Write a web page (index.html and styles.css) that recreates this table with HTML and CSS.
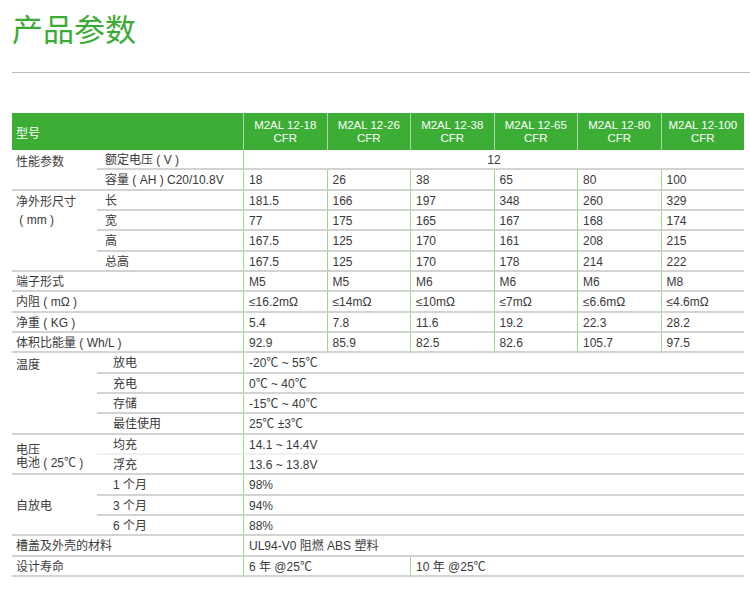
FILE: index.html
```html
<!DOCTYPE html>
<html lang="zh-CN">
<head>
<meta charset="utf-8">
<title>产品参数</title>
<link rel="stylesheet" href="styles.css">
</head>
<body>
<div class="page">
  <h1 class="title">产品参数</h1>
  <div class="rule"></div>
  <table class="spec">
    <colgroup>
      <col class="c-g"><col class="c-s">
      <col class="c-d"><col class="c-d"><col class="c-d"><col class="c-d"><col class="c-d"><col class="c-d">
    </colgroup>
    <thead>
      <tr>
        <th colspan="2" class="h-label">型号</th>
        <th class="h-model">M2AL 12-18<br>CFR</th>
        <th class="h-model">M2AL 12-26<br>CFR</th>
        <th class="h-model">M2AL 12-38<br>CFR</th>
        <th class="h-model">M2AL 12-65<br>CFR</th>
        <th class="h-model">M2AL 12-80<br>CFR</th>
        <th class="h-model">M2AL 12-100<br>CFR</th>
      </tr>
    </thead>
    <tbody>
      <tr>
        <td rowspan="2" class="g top">性能参数</td>
        <td class="s">额定电压 ( V )</td>
        <td colspan="6" class="d center">12</td>
      </tr>
      <tr>
        <td class="s">容量 ( AH ) C20/10.8V</td>
        <td class="d">18</td><td class="d">26</td><td class="d">38</td><td class="d">65</td><td class="d">80</td><td class="d">100</td>
      </tr>
      <tr>
        <td rowspan="4" class="g top two">净外形尺寸<br>&nbsp;( mm )</td>
        <td class="s">长</td>
        <td class="d">181.5</td><td class="d">166</td><td class="d">197</td><td class="d">348</td><td class="d">260</td><td class="d">329</td>
      </tr>
      <tr>
        <td class="s">宽</td>
        <td class="d">77</td><td class="d">175</td><td class="d">165</td><td class="d">167</td><td class="d">168</td><td class="d">174</td>
      </tr>
      <tr>
        <td class="s">高</td>
        <td class="d">167.5</td><td class="d">125</td><td class="d">170</td><td class="d">161</td><td class="d">208</td><td class="d">215</td>
      </tr>
      <tr>
        <td class="s">总高</td>
        <td class="d">167.5</td><td class="d">125</td><td class="d">170</td><td class="d">178</td><td class="d">214</td><td class="d">222</td>
      </tr>
      <tr>
        <td colspan="2" class="g">端子形式</td>
        <td class="d">M5</td><td class="d">M5</td><td class="d">M6</td><td class="d">M6</td><td class="d">M6</td><td class="d">M8</td>
      </tr>
      <tr>
        <td colspan="2" class="g">内阻 ( mΩ )</td>
        <td class="d">≤16.2mΩ</td><td class="d">≤14mΩ</td><td class="d">≤10mΩ</td><td class="d">≤7mΩ</td><td class="d">≤6.6mΩ</td><td class="d">≤4.6mΩ</td>
      </tr>
      <tr>
        <td colspan="2" class="g">净重 ( KG )</td>
        <td class="d">5.4</td><td class="d">7.8</td><td class="d">11.6</td><td class="d">19.2</td><td class="d">22.3</td><td class="d">28.2</td>
      </tr>
      <tr>
        <td colspan="2" class="g">体积比能量 ( Wh/L )</td>
        <td class="d">92.9</td><td class="d">85.9</td><td class="d">82.5</td><td class="d">82.6</td><td class="d">105.7</td><td class="d">97.5</td>
      </tr>
      <tr>
        <td rowspan="4" class="g top">温度</td>
        <td class="s wide">放电</td>
        <td colspan="6" class="d">-20℃ ~ 55℃</td>
      </tr>
      <tr>
        <td class="s wide">充电</td>
        <td colspan="6" class="d">0℃ ~ 40℃</td>
      </tr>
      <tr>
        <td class="s wide">存储</td>
        <td colspan="6" class="d">-15℃ ~ 40℃</td>
      </tr>
      <tr>
        <td class="s wide">最佳使用</td>
        <td colspan="6" class="d">25℃ ±3℃</td>
      </tr>
      <tr>
        <td rowspan="2" class="g mid tight">电压<br>电池 ( 25℃ )</td>
        <td class="s wide nob">均充</td>
        <td colspan="6" class="d nob">14.1 ~ 14.4V</td>
      </tr>
      <tr>
        <td class="s wide">浮充</td>
        <td colspan="6" class="d">13.6 ~ 13.8V</td>
      </tr>
      <tr>
        <td rowspan="3" class="g mid">自放电</td>
        <td class="s wide">1 个月</td>
        <td colspan="6" class="d">98%</td>
      </tr>
      <tr>
        <td class="s wide">3 个月</td>
        <td colspan="6" class="d">94%</td>
      </tr>
      <tr>
        <td class="s wide">6 个月</td>
        <td colspan="6" class="d">88%</td>
      </tr>
      <tr>
        <td colspan="2" class="g">槽盖及外壳的材料</td>
        <td colspan="6" class="d">UL94-V0 阻燃 ABS 塑料</td>
      </tr>
      <tr>
        <td colspan="2" class="g">设计寿命</td>
        <td colspan="2" class="d">6 年 @25℃</td>
        <td colspan="4" class="d">10 年 @25℃</td>
      </tr>
    </tbody>
  </table>
</div>
</body>
</html>
```

FILE: styles.css
```css
html, body {
  margin: 0;
  padding: 0;
  background: #ffffff;
}

body {
  font-family: "Liberation Sans", "Noto Sans CJK SC", Arial, sans-serif;
  color: #3a3a3a;
}

.page {
  padding: 10px 0 0 12px;
}

.title {
  margin: 0;
  font-family: "Noto Sans CJK SC", sans-serif;
  font-weight: 400;
  font-size: 31px;
  line-height: 36px;
  color: #3aaa35;
}

.rule {
  margin-top: 26px;
  height: 1px;
  background: #bdbdbd;
}

.spec {
  margin-top: 40px;
  width: 732px;
  table-layout: fixed;
  border-collapse: separate;
  border-spacing: 0;
  font-size: 12px;
}

.c-g { width: 85px; }
.c-s { width: 146px; }
.c-d { width: 83.5px; }

.spec thead tr {
  height: 37px;
}

.spec th {
  background: #3cae36;
  color: #ffffff;
  font-weight: 400;
  padding: 1px 0 0;
  vertical-align: middle;
}

.h-label {
  text-align: left;
  padding-left: 4px !important;
  font-size: 12px;
}

.h-model {
  text-align: center;
  font-size: 11.5px;
  line-height: 13px;
  border-left: 1px solid rgba(255, 255, 255, 0.55);
}

.spec tbody tr {
  height: 20.333px;
}

.spec td {
  padding: 2px 0 0;
  line-height: 14px;
  vertical-align: middle;
  text-align: left;
  white-space: nowrap;
  border-bottom: 2px solid #d3d3d3;
}

.g {
  padding-left: 4px !important;
}

.g.top {
  vertical-align: top;
  padding-top: 5px !important;
}

.g.two {
  line-height: 18px;
  padding-top: 2px !important;
}

.g.tight {
  line-height: 13px;
  padding-top: 6px !important;
}

.s {
  padding-left: 8px !important;
}

.s.wide {
  padding-left: 16px !important;
}

.d {
  padding-left: 5px !important;
  border-left: 1px solid #9dd68e;
}

.d.center {
  text-align: center;
  padding-left: 0 !important;
}

.nob {
  border-bottom-color: #f0f0f0 !important;
}
```
